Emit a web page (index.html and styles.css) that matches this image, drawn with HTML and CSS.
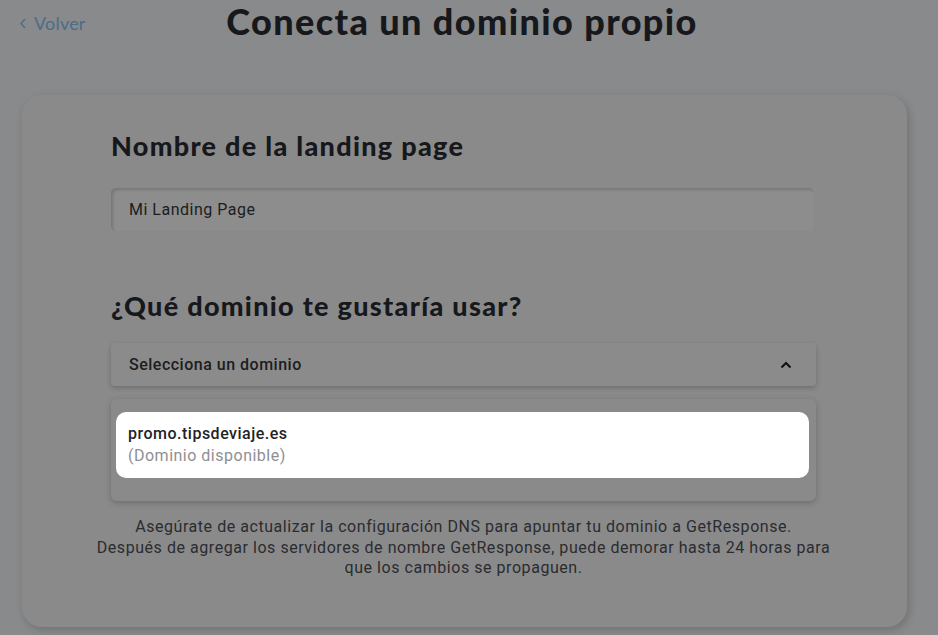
FILE: index.html
```html
<html lang="es">
  <head>
    <meta charset="utf-8">
    <meta name="viewport" content="width=device-width, initial-scale=1">
    <link rel="stylesheet" href="styles.css">
  </head>
  <body>
    <div class="top">
      <a class="back" href="#">
        <svg width="8" height="11" viewBox="0 0 8 11"><path d="M6 1 L2 5.5 L6 10" fill="none" stroke="currentColor" stroke-width="1.4"/></svg>
        Volver
      </a>
      <h1 class="title">Conecta un dominio propio</h1>
      <div></div>
    </div>

    <div class="card">
      <h2 class="heading">Nombre de la landing page</h2>
      <div class="field">Mi Landing Page</div>

      <h2 class="heading heading__second">¿Qué dominio te gustaría usar?</h2>
      <div class="select">
        <span>Selecciona un dominio</span>
        <svg width="12" height="8" viewBox="0 0 12 8"><path d="M1.5 6.5 L6 2 L10.5 6.5" fill="none" stroke="#111" stroke-width="2"/></svg>
      </div>
      <div class="dropdown">
        <div class="option">
          <div class="option_name">promo.tipsdeviaje.es</div>
          <div class="option_note">(Dominio disponible)</div>
        </div>
      </div>

      <p class="note">Asegúrate de actualizar la configuración DNS para apuntar tu dominio a GetResponse.<br>
      Después de agregar los servidores de nombre GetResponse, puede demorar hasta 24 horas para<br>
      que los cambios se propaguen.</p>
    </div>
  </body>
</html>
```

FILE: styles.css
```css
html, body {
  margin: 0; padding: 0;
  background: #898a8c;
  font-family: Roboto, "Liberation Sans", sans-serif;
  color: #1c1d20;
}

.top {
  display: grid;
  grid-template-columns: 1fr auto 1fr;
  align-items: center;
  height: 46px;
  padding: 0 19px;
}

.back {
  display: flex;
  align-items: center;
  gap: 7px;
  color: #4c6c87;
  text-decoration: none;
  font-family: "Source Sans Pro", Lato, sans-serif;
  font-size: 18px;
  letter-spacing: 0.2px;
}

.title {
  margin: 0;
  font-family: "Source Sans Pro", Lato, sans-serif;
  font-weight: 900;
  font-size: 36px;
  letter-spacing: 1.4px;
  color: #16181b;
  transform: translate(-7px, -2px);
}

.card {
  margin: 49px 31px 0 22px;
  height: 532px;
  box-sizing: border-box;
  padding: 34px 91px 0 89px;
  background: #8a8a8b;
  border-radius: 20px;
  box-shadow: 2px 3px 8px rgba(0, 0, 0, 0.18);
}

.heading {
  margin: 0;
  font-family: "Source Sans Pro", Lato, sans-serif;
  font-weight: 900;
  font-size: 27px;
  line-height: 34px;
  letter-spacing: 1.3px;
  color: #16181b;
}

.heading__second {
  margin-top: 58px;
}

.field {
  margin: 25px 2px 0 0;
  height: 43px;
  display: flex;
  align-items: center;
  padding-left: 18px;
  background: #8d8d8d;
  border-radius: 5px;
  box-shadow: inset 2px 2px 3px rgba(0, 0, 0, 0.16);
  font-size: 16px;
  letter-spacing: 0.5px;
  color: #1c1d20;
}

.select {
  margin-top: 20px;
  height: 43px;
  display: flex;
  align-items: center;
  justify-content: space-between;
  padding: 0 24px 0 18px;
  background: #8b8b8b;
  border-radius: 4px;
  box-shadow: 0 2px 5px rgba(0, 0, 0, 0.2);
  font-size: 16px;
  font-weight: 500;
  letter-spacing: 0.5px;
}

.dropdown {
  margin-top: 13px;
  height: 102px;
  box-sizing: border-box;
  padding: 13px 7px 0 5px;
  background: #8a8a8a;
  border-radius: 6px;
  box-shadow: 0 2px 6px rgba(0, 0, 0, 0.22);
}

.option {
  height: 66px;
  box-sizing: border-box;
  padding: 11px 12px 0 12px;
  background: #ffffff;
  border-radius: 10px;
  font-size: 16px;
  line-height: 22px;
  letter-spacing: 0.5px;
}

.option_name {
  color: #222326;
  font-weight: 500;
}

.option_note {
  color: #8e8f93;
}

.note {
  margin: 16px -45px 0 -45px;
  text-align: center;
  font-size: 16px;
  line-height: 20.5px;
  letter-spacing: 0.55px;
  color: #2b2c2f;
}
```
